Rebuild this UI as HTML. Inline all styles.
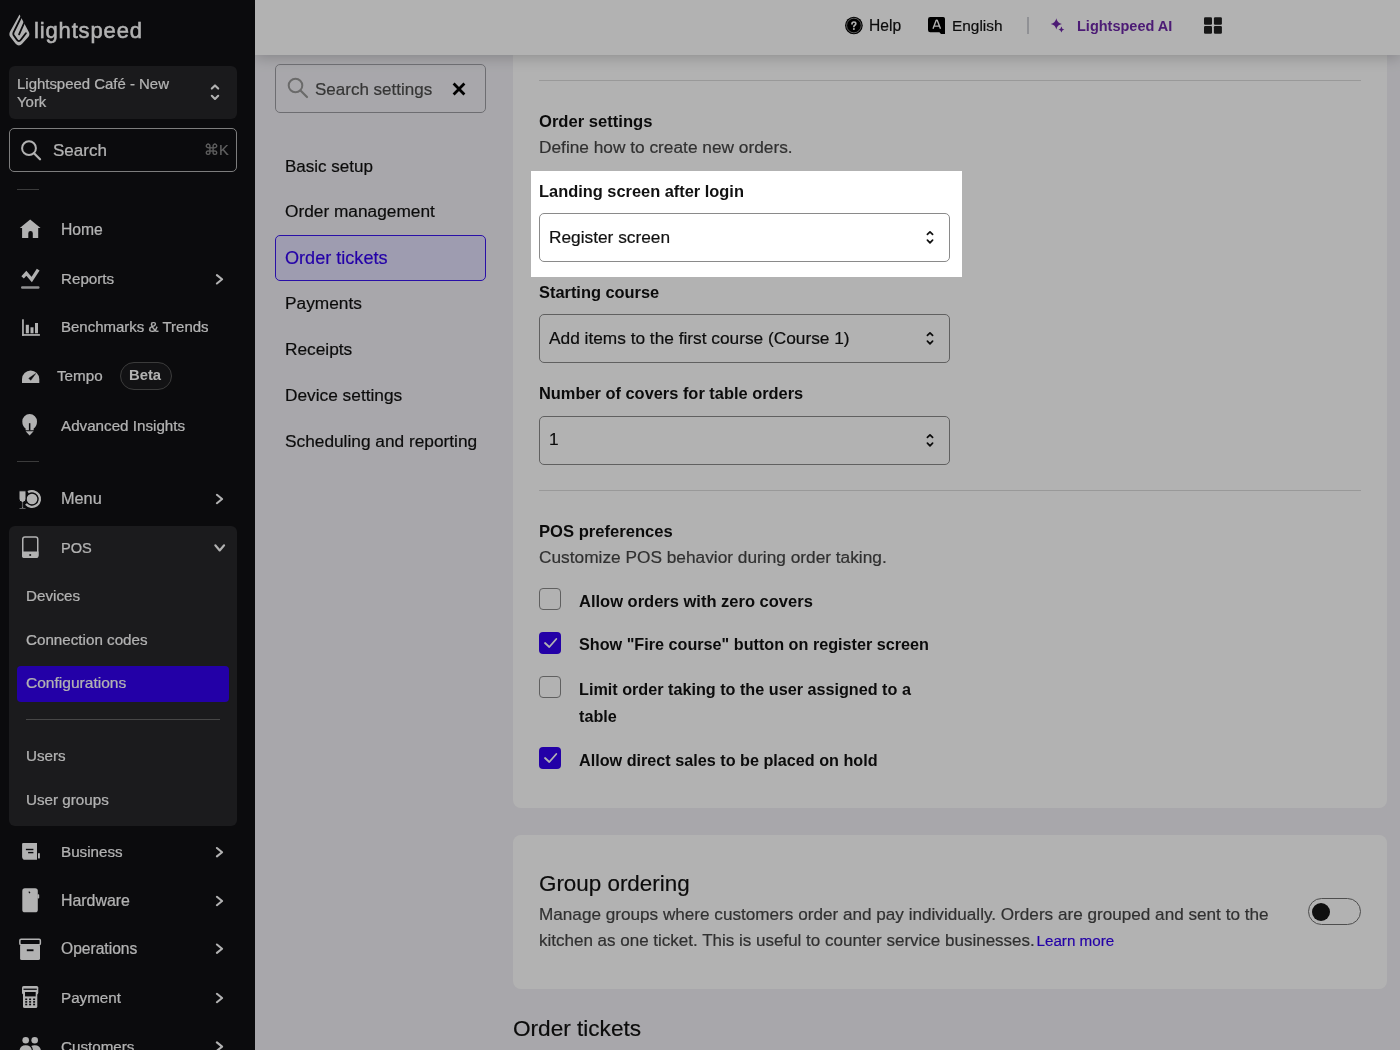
<!DOCTYPE html>
<html><head><meta charset="utf-8"><style>
html,body{margin:0;padding:0}
body{width:1400px;height:1050px;overflow:hidden;position:relative;font-family:"Liberation Sans",sans-serif}
.t{position:absolute;white-space:nowrap;line-height:1;will-change:transform;-webkit-text-stroke:0.2px currentColor}
.r{position:absolute}
</style></head><body>
<div class="r" style="left:0px;top:0px;width:1400px;height:1050px;background:#f1f0f5"></div>
<div class="r" style="left:255px;top:0px;width:258px;height:1050px;background:#f1f0f5"></div>
<div class="r" style="left:513px;top:-20px;width:874px;height:828px;background:#fff;border-radius:8px"></div>
<div class="r" style="left:513px;top:835px;width:874px;height:154px;background:#fff;border-radius:8px"></div>
<div class="r" style="left:0px;top:0px;width:255px;height:1050px;background:#111114"></div>
<svg class="r" style="left:0px;top:1px;" width="255" height="60" viewBox="0 0 255 60"><path d="M19.5 13.6 L10.4 30 Q8.4 33 10.2 35.8 L15.4 42.4 Q18.9 46.6 22.4 42.4 L28.5 35.8 Q30.4 33 28.3 30 Z" fill="#fff"/><path d="M22 14.4 L13.6 31.4 Q12.9 33 13.7 34.3 L16.9 38.8 Q18.9 41.5 20.9 38.8 L25.9 32.2" fill="none" stroke="#111114" stroke-width="1.9" stroke-linecap="round" stroke-linejoin="round"/><path d="M25.4 19 L19.1 33.4" stroke="#111114" stroke-width="1.8" stroke-linecap="round"/></svg>
<div class="t" style="left:34.3px;top:19.78px;font-size:22px;color:#ffffff;font-weight:400;letter-spacing:0.85px;-webkit-text-stroke:0.5px #fff">lightspeed</div>
<div class="r" style="left:9px;top:66px;width:228px;height:53px;background:#262629;border-radius:6px"></div>
<div class="t" style="left:16.6px;top:76.84px;font-size:14.95px;color:#ffffff;font-weight:400;">Lightspeed Café - New</div>
<div class="t" style="left:16.6px;top:94.74px;font-size:14.95px;color:#ffffff;font-weight:400;">York</div>
<div class="r" style="left:9px;top:128px;width:228px;height:44px;box-sizing:border-box;border:1px solid #b4b4b4;border-radius:5px;background:#111114"></div>
<div class="t" style="left:52.5px;top:141.86px;font-size:17px;color:#ffffff;font-weight:400;">Search</div>
<div class="t" style="left:203.5px;top:143.23px;font-size:14.5px;color:#8c8c8c;font-weight:400;">⌘K</div>
<div class="r" style="left:17px;top:189px;width:22px;height:1px;background:#555"></div>
<div class="t" style="left:61.0px;top:221.71px;font-size:15.7px;color:#ffffff;font-weight:400;">Home</div>
<div class="t" style="left:61.0px;top:271.33px;font-size:15.2px;color:#ffffff;font-weight:400;">Reports</div>
<div class="t" style="left:61.0px;top:319.40px;font-size:15.0px;color:#ffffff;font-weight:400;">Benchmarks &amp; Trends</div>
<div class="t" style="left:61.0px;top:418.38px;font-size:15.2px;color:#ffffff;font-weight:400;">Advanced Insights</div>
<div class="t" style="left:61.0px;top:490.10px;font-size:16.3px;color:#ffffff;font-weight:400;">Menu</div>
<div class="t" style="left:61.0px;top:844.23px;font-size:15.2px;color:#ffffff;font-weight:400;">Business</div>
<div class="t" style="left:61.0px;top:893.44px;font-size:15.9px;color:#ffffff;font-weight:400;">Hardware</div>
<div class="t" style="left:61.0px;top:941.29px;font-size:15.6px;color:#ffffff;font-weight:400;">Operations</div>
<div class="t" style="left:61.0px;top:990.03px;font-size:15.2px;color:#ffffff;font-weight:400;">Payment</div>
<div class="t" style="left:61.0px;top:1038.63px;font-size:15.2px;color:#ffffff;font-weight:400;">Customers</div>
<div class="t" style="left:56.5px;top:368.38px;font-size:15.2px;color:#ffffff;font-weight:400;">Tempo</div>
<div class="r" style="left:120px;top:362px;width:52px;height:28px;box-sizing:border-box;border:1px solid #555;border-radius:14px;background:#1b1b1e"></div>
<div class="t" style="left:128.8px;top:367.97px;font-size:14.8px;color:#ffffff;font-weight:700;-webkit-text-stroke:0;">Beta</div>
<div class="r" style="left:17px;top:461px;width:22px;height:1px;background:#555"></div>
<div class="r" style="left:9px;top:526px;width:228px;height:300px;background:#27272a;border-radius:6px"></div>
<div class="t" style="left:60.8px;top:540.64px;font-size:14.6px;color:#ffffff;font-weight:400;">POS</div>
<div class="t" style="left:26.0px;top:588.13px;font-size:15.2px;color:#ffffff;font-weight:400;">Devices</div>
<div class="t" style="left:26.0px;top:631.73px;font-size:15.2px;color:#ffffff;font-weight:400;">Connection codes</div>
<div class="r" style="left:17px;top:666px;width:212px;height:36px;background:#3300f0;border-radius:4px"></div>
<div class="t" style="left:26.0px;top:675.24px;font-size:15.55px;color:#ffffff;font-weight:400;">Configurations</div>
<div class="r" style="left:26px;top:719px;width:194px;height:1px;background:#666"></div>
<div class="t" style="left:26.0px;top:748.38px;font-size:15.2px;color:#ffffff;font-weight:400;">Users</div>
<div class="t" style="left:26.0px;top:792.13px;font-size:15.2px;color:#ffffff;font-weight:400;">User groups</div>
<svg class="r" style="left:0;top:0" width="255" height="1050" viewBox="0 0 255 1050"><path d="M30.15 219.6 L40.6 228.1 L38.2 228.1 L38.2 238.1 L32.8 238.1 L32.8 233.2 Q32.8 231 30.55 231 Q28.3 231 28.3 233.2 L28.3 238.1 L22.1 238.1 L22.1 228.1 L19.8 228.1 Z" fill="#fff"/><path d="M22.6 277.4 L26.3 273.3 L31.7 279.6 L38.2 269.6" fill="none" stroke="#fff" stroke-width="3.3" stroke-linejoin="miter" stroke-miterlimit="3"/><rect x="21" y="286.2" width="18.5" height="2.5" rx="1.2" fill="#fff" opacity="0.8"/><rect x="22.1" y="319.3" width="1.7" height="16.5" fill="#fff"/><rect x="22.1" y="334.1" width="17.8" height="1.7" fill="#fff"/><rect x="25.8" y="324.8" width="3.1" height="8.5" fill="#fff"/><rect x="30.5" y="327.3" width="3" height="6" fill="#fff"/><rect x="35" y="323" width="3" height="10.3" fill="#fff"/><path d="M22 383.1 L22 379.2 A8.65 8.65 0 0 1 39.3 379.2 L39.3 383.1 Z" fill="#fff"/><path d="M28.8 378.3 L35.7 373.5 L30.7 380.3 Z" fill="#111114" stroke="#111114" stroke-width="0.5" stroke-linejoin="round"/><path d="M25.6 428.6 Q22.3 426 22.3 421.4 A7.35 7.35 0 0 1 37 421.4 Q37 426 33.7 428.6 L33.7 430.2 L25.6 430.2 Z" fill="#fff"/><path d="M29.65 423.2 L29.65 430.5" stroke="#111114" stroke-width="1.5"/><path d="M25.6 431.2 L33.6 431.2 L29.6 435.4 Z" fill="#fff"/><path d="M28.05 492.16 A7.9 7.9 0 1 1 25.95 504.08" fill="none" stroke="#fff" stroke-width="2.4"/><circle cx="32" cy="499" r="5.3" fill="#fff"/><path d="M19 490.8 L26 490.8 L26 499 Q26 501.8 23.3 502.1 L23.3 507.5 L26 507.5 L26 509 L19 509 L19 507.5 L21.9 507.5 L21.9 502.1 Q19 501.8 19 499 Z" fill="#fff" stroke="#111114" stroke-width="1"/><path d="M23.2 843 L37 843 L37 859.8 L25.2 859.8 Q22.1 859.8 22.1 856.7 L22.1 844.1 Q22.1 843 23.2 843 Z" fill="#fff"/><rect x="25.9" y="848.8" width="7.5" height="1.4" fill="#111114"/><rect x="28.1" y="851.9" width="5.3" height="1.4" fill="#111114"/><rect x="38" y="852.9" width="1.9" height="5.7" rx="0.95" fill="#fff"/><rect x="22.3" y="888.3" width="15.5" height="24" rx="2.6" fill="#fff"/><rect x="37.4" y="894.3" width="1.8" height="4.2" rx="0.8" fill="#fff"/><path d="M28.8 891.6 L30 893.2" stroke="#111114" stroke-width="1.1"/><rect x="19.85" y="939.35" width="20.5" height="5.4" rx="1.2" fill="none" stroke="#fff" stroke-width="1.5"/><rect x="20.1" y="944.6" width="19.9" height="15.4" rx="1.6" fill="#fff"/><rect x="26.8" y="949.3" width="6.7" height="1.9" fill="#111114"/><rect x="22" y="986" width="16.3" height="8.4" rx="1.6" fill="#fff"/><rect x="23.5" y="988.6" width="13.3" height="1.3" fill="#111114"/><rect x="23" y="993" width="14.3" height="15" rx="1.6" fill="#fff"/><rect x="25" y="992" width="10.7" height="4.4" fill="#111114"/><rect x="25.2" y="998.5" width="2" height="1.6" fill="#111114"/><rect x="29.1" y="998.5" width="2" height="1.6" fill="#111114"/><rect x="33.1" y="998.5" width="2" height="1.6" fill="#111114"/><rect x="25.2" y="1001.1" width="2" height="1.6" fill="#111114"/><rect x="29.1" y="1001.1" width="2" height="1.6" fill="#111114"/><rect x="33.1" y="1001.1" width="2" height="1.6" fill="#111114"/><rect x="25.2" y="1003.7" width="2" height="1.6" fill="#111114"/><rect x="29.1" y="1003.7" width="2" height="1.6" fill="#111114"/><rect x="33.1" y="1003.7" width="2" height="1.6" fill="#111114"/><circle cx="25.7" cy="1040.3" r="3.3" fill="#fff"/><circle cx="34.7" cy="1040.3" r="3.3" fill="#fff"/><path d="M19.4 1052 Q19.4 1045.2 25.7 1045.2 Q32 1045.2 32 1052 Z" fill="#fff"/><path d="M31.2 1046 Q32.5 1045.2 34.7 1045.2 Q41 1045.2 41 1052 L33 1052 Q33 1047.5 31.2 1046 Z" fill="#fff"/><path d="M216.9 275.1 L222.1 279.3 L216.9 283.5" fill="none" stroke="#fff" stroke-width="2.1" stroke-linecap="round" stroke-linejoin="round"/><path d="M216.9 494.8 L222.1 499.0 L216.9 503.2" fill="none" stroke="#fff" stroke-width="2.1" stroke-linecap="round" stroke-linejoin="round"/><path d="M216.9 848.0 L222.1 852.2 L216.9 856.4" fill="none" stroke="#fff" stroke-width="2.1" stroke-linecap="round" stroke-linejoin="round"/><path d="M216.9 896.8 L222.1 901.0 L216.9 905.2" fill="none" stroke="#fff" stroke-width="2.1" stroke-linecap="round" stroke-linejoin="round"/><path d="M216.9 944.5 L222.1 948.7 L216.9 952.9" fill="none" stroke="#fff" stroke-width="2.1" stroke-linecap="round" stroke-linejoin="round"/><path d="M216.9 993.8 L222.1 998.0 L216.9 1002.2" fill="none" stroke="#fff" stroke-width="2.1" stroke-linecap="round" stroke-linejoin="round"/><path d="M216.9 1042.4 L222.1 1046.6 L216.9 1050.8" fill="none" stroke="#fff" stroke-width="2.1" stroke-linecap="round" stroke-linejoin="round"/><path d="M215.3 545.3 L219.7 550.5 L224.1 545.3" fill="none" stroke="#fff" stroke-width="2.1" stroke-linecap="round" stroke-linejoin="round"/><path d="M211.8 88.6 L215 85.4 L218.2 88.6 M211.8 95.8 L215 99 L218.2 95.8" fill="none" stroke="#fff" stroke-width="2.1" stroke-linecap="round" stroke-linejoin="round"/><circle cx="29" cy="148.2" r="6.9" fill="none" stroke="#fff" stroke-width="2"/><path d="M34 153.3 L40 159.3" stroke="#fff" stroke-width="2.3" stroke-linecap="round"/></svg>
<svg class="r" style="left:0;top:530px" width="60" height="40" viewBox="0 530 60 40"><rect x="22.75" y="536.95" width="15" height="20.3" rx="2.2" fill="none" stroke="#fff" stroke-width="1.5"/><path d="M22 551.6 L38.5 551.6 L38.5 556 Q38.5 558 36.5 558 L24 558 Q22 558 22 556 Z" fill="#fff"/><circle cx="30.2" cy="555" r="1.05" fill="#27272a"/></svg>
<div class="r" style="left:255px;top:0px;width:1145px;height:55px;background:#fff;box-shadow:0 2px 14px rgba(0,0,0,0.22)"></div>
<div class="t" style="left:869.0px;top:18.19px;font-size:15.6px;color:#111;font-weight:400;">Help</div>
<div class="t" style="left:951.5px;top:18.36px;font-size:15.4px;color:#111;font-weight:400;">English</div>
<div class="r" style="left:1027px;top:17px;width:2px;height:17px;background:#cfd0d6"></div>
<div class="t" style="left:1077.0px;top:19.13px;font-size:14.5px;color:#6e28a8;font-weight:700;-webkit-text-stroke:0;">Lightspeed AI</div>
<svg class="r" style="left:800px;top:0" width="500" height="55" viewBox="800 0 500 55"><circle cx="853.9" cy="25.5" r="8.8" fill="#000"/><circle cx="853.9" cy="25.5" r="7.3" fill="none" stroke="#bbb" stroke-width="0.7"/><path d="M852 23.8 Q852 22 853.9 22 Q855.8 22 855.8 23.6 Q855.8 24.7 854.8 25.2 Q853.9 25.7 853.9 26.6" fill="none" stroke="#fff" stroke-width="1.7" stroke-linecap="round"/><circle cx="853.9" cy="28.9" r="1" fill="#fff"/><path d="M930.3 16.9 L943.2 16.9 Q945 16.9 945 18.7 L945 33.9 L941 33.9 L939.4 32.3 L930.3 32.3 Q928 32.3 928 30 L928 19.2 Q928 16.9 930.3 16.9 Z" fill="#000"/><path d="M933 28.8 L936.2 20.3 L937.2 20.3 L940.5 28.8 M934.2 26.1 L939.3 26.1" fill="none" stroke="#fff" stroke-width="1.4" stroke-linejoin="round"/><path d="M1056.3 18.2 Q1057.1 23.1 1061.9 23.9 Q1057.1 24.7 1056.3 29.6 Q1055.5 24.7 1050.7 23.9 Q1055.5 23.1 1056.3 18.2 Z" fill="#6e28a8"/><path d="M1061.4 26.4 Q1061.8 29 1064.4 29.4 Q1061.8 29.8 1061.4 32.4 Q1061 29.8 1058.4 29.4 Q1061 29 1061.4 26.4 Z" fill="#6e28a8"/><rect x="1204" y="17.2" width="8" height="7.6" rx="1.2" fill="#222"/><rect x="1213.9" y="17.2" width="8" height="7.6" rx="1.2" fill="#222"/><rect x="1204" y="26.1" width="8" height="7.6" rx="1.2" fill="#222"/><rect x="1213.9" y="26.1" width="8" height="7.6" rx="1.2" fill="#222"/></svg>
<div class="r" style="left:275px;top:64px;width:211px;height:49px;box-sizing:border-box;border:1px solid #9d9da3;border-radius:5px"></div>
<svg class="r" style="left:287px;top:77px;" width="22" height="22" viewBox="0 0 22 22"><circle cx="8.5" cy="8.5" r="6.8" fill="none" stroke="#999" stroke-width="2"/><path d="M13.5 13.5 L20 20" stroke="#999" stroke-width="2.2" stroke-linecap="round"/></svg>
<div class="t" style="left:315.0px;top:80.51px;font-size:17px;color:#4d4d4d;font-weight:400;">Search settings</div>
<svg class="r" style="left:452px;top:82px;" width="14" height="14" viewBox="0 0 14 14"><path d="M2.6 2.6 L11.4 11.4 M11.4 2.6 L2.6 11.4" stroke="#000" stroke-width="2.8" stroke-linecap="square"/></svg>
<div class="r" style="left:275px;top:235px;width:211px;height:46px;box-sizing:border-box;border:1px solid #3c18f0;border-radius:5px;background:#e2e0fd"></div>
<div class="t" style="left:284.5px;top:157.71px;font-size:17.0px;color:#111;font-weight:400;">Basic setup</div>
<div class="t" style="left:284.5px;top:203.46px;font-size:17.3px;color:#111;font-weight:400;">Order management</div>
<div class="t" style="left:284.5px;top:248.78px;font-size:18.1px;color:#3300f0;font-weight:400;">Order tickets</div>
<div class="t" style="left:284.5px;top:295.46px;font-size:17.3px;color:#111;font-weight:400;">Payments</div>
<div class="t" style="left:284.5px;top:341.46px;font-size:17.3px;color:#111;font-weight:400;">Receipts</div>
<div class="t" style="left:284.5px;top:387.46px;font-size:17.3px;color:#111;font-weight:400;">Device settings</div>
<div class="t" style="left:284.5px;top:433.46px;font-size:17.3px;color:#111;font-weight:400;">Scheduling and reporting</div>
<div class="r" style="left:539px;top:80px;width:822px;height:1px;background:#dcdcdc"></div>
<div class="t" style="left:539.0px;top:113.55px;font-size:16.6px;color:#111;font-weight:700;-webkit-text-stroke:0;">Order settings</div>
<div class="t" style="left:539.0px;top:138.56px;font-size:17.3px;color:#464646;font-weight:400;">Define how to create new orders.</div>
<div class="t" style="left:539.0px;top:182.62px;font-size:16.4px;color:#111;font-weight:700;-webkit-text-stroke:0;">Landing screen after login</div>
<div class="r" style="left:539px;top:213px;width:411px;height:49px;box-sizing:border-box;border:1px solid #8a8a8a;border-radius:5px;background:#fff"></div>
<div class="t" style="left:549.0px;top:228.56px;font-size:17.3px;color:#111;font-weight:400;">Register screen</div>
<svg class="r" style="left:925px;top:230px;" width="10" height="15" viewBox="0 0 10 15"><path d="M2.4 4.4 L5 1.8 L7.6 4.4 M2.4 10.2 L5 12.8 L7.6 10.2" fill="none" stroke="#111" stroke-width="1.7" stroke-linecap="round" stroke-linejoin="round"/></svg>
<div class="t" style="left:539.0px;top:283.92px;font-size:16.4px;color:#111;font-weight:700;-webkit-text-stroke:0;">Starting course</div>
<div class="r" style="left:539px;top:314px;width:411px;height:49px;box-sizing:border-box;border:1px solid #8a8a8a;border-radius:5px;background:#fff"></div>
<div class="t" style="left:549.0px;top:329.86px;font-size:17.3px;color:#111;font-weight:400;">Add items to the first course (Course 1)</div>
<svg class="r" style="left:925px;top:331px;" width="10" height="15" viewBox="0 0 10 15"><path d="M2.4 4.4 L5 1.8 L7.6 4.4 M2.4 10.2 L5 12.8 L7.6 10.2" fill="none" stroke="#111" stroke-width="1.7" stroke-linecap="round" stroke-linejoin="round"/></svg>
<div class="t" style="left:539.0px;top:384.62px;font-size:16.4px;color:#111;font-weight:700;-webkit-text-stroke:0;">Number of covers for table orders</div>
<div class="r" style="left:539px;top:416px;width:411px;height:49px;box-sizing:border-box;border:1px solid #8a8a8a;border-radius:5px;background:#fff"></div>
<div class="t" style="left:549.0px;top:431.16px;font-size:17.3px;color:#111;font-weight:400;">1</div>
<svg class="r" style="left:925px;top:433px;" width="10" height="15" viewBox="0 0 10 15"><path d="M2.4 4.4 L5 1.8 L7.6 4.4 M2.4 10.2 L5 12.8 L7.6 10.2" fill="none" stroke="#111" stroke-width="1.7" stroke-linecap="round" stroke-linejoin="round"/></svg>
<div class="r" style="left:539px;top:490px;width:822px;height:1px;background:#dcdcdc"></div>
<div class="t" style="left:539.0px;top:523.55px;font-size:16.6px;color:#111;font-weight:700;-webkit-text-stroke:0;">POS preferences</div>
<div class="t" style="left:539.0px;top:549.16px;font-size:17.3px;color:#464646;font-weight:400;">Customize POS behavior during order taking.</div>
<div class="r" style="left:539px;top:588px;width:22px;height:22px;box-sizing:border-box;border:1px solid #8a8a8a;border-radius:4px;background:#fff"></div>
<div class="r" style="left:539px;top:632px;width:22px;height:22px;background:#3300f0;border-radius:4px"></div>
<svg class="r" style="left:539px;top:632px;" width="22" height="22" viewBox="0 0 22 22"><path d="M6 11 L10.3 15 L17.3 7" fill="none" stroke="#fff" stroke-width="1.8" stroke-linecap="round" stroke-linejoin="round"/></svg>
<div class="r" style="left:539px;top:676px;width:22px;height:22px;box-sizing:border-box;border:1px solid #8a8a8a;border-radius:4px;background:#fff"></div>
<div class="r" style="left:539px;top:747px;width:22px;height:22px;background:#3300f0;border-radius:4px"></div>
<svg class="r" style="left:539px;top:747px;" width="22" height="22" viewBox="0 0 22 22"><path d="M6 11 L10.3 15 L17.3 7" fill="none" stroke="#fff" stroke-width="1.8" stroke-linecap="round" stroke-linejoin="round"/></svg>
<div class="t" style="left:578.5px;top:592.53px;font-size:16.5px;color:#111;font-weight:700;-webkit-text-stroke:0;">Allow orders with zero covers</div>
<div class="t" style="left:578.5px;top:636.29px;font-size:16.2px;color:#111;font-weight:700;-webkit-text-stroke:0;">Show "Fire course" button on register screen</div>
<div class="t" style="left:578.5px;top:680.69px;font-size:16.2px;color:#111;font-weight:700;-webkit-text-stroke:0;">Limit order taking to the user assigned to a</div>
<div class="t" style="left:578.5px;top:707.69px;font-size:16.2px;color:#111;font-weight:700;-webkit-text-stroke:0;">table</div>
<div class="t" style="left:578.5px;top:751.79px;font-size:16.2px;color:#111;font-weight:700;-webkit-text-stroke:0;">Allow direct sales to be placed on hold</div>
<div class="t" style="left:539.0px;top:873.14px;font-size:22.4px;color:#111;font-weight:400;">Group ordering</div>
<div class="t" style="left:539.0px;top:906.28px;font-size:17.15px;color:#464646;font-weight:400;">Manage groups where customers order and pay individually. Orders are grouped and sent to the</div>
<div class="t" style="left:539.0px;top:931.71px;font-size:17.0px;color:#464646;font-weight:400;">kitchen as one ticket. This is useful to counter service businesses. <span style="color:#3300f0;font-size:15.2px;margin-left:-3px">Learn more</span></div>
<div class="r" style="left:1308px;top:898px;width:53px;height:27px;box-sizing:border-box;border:1px solid #707070;border-radius:14px;background:#fff"></div>
<div class="r" style="left:1311.5px;top:902.8px;width:18px;height:18px;background:#161616;border-radius:50%"></div>
<div class="t" style="left:513.0px;top:1017.97px;font-size:22.6px;color:#111;font-weight:400;">Order tickets</div>
<div class="r" style="left:531px;top:171px;width:431px;height:106px;box-shadow:0 0 0 3000px rgba(0,0,0,0.3);z-index:50"></div>
</body></html>
